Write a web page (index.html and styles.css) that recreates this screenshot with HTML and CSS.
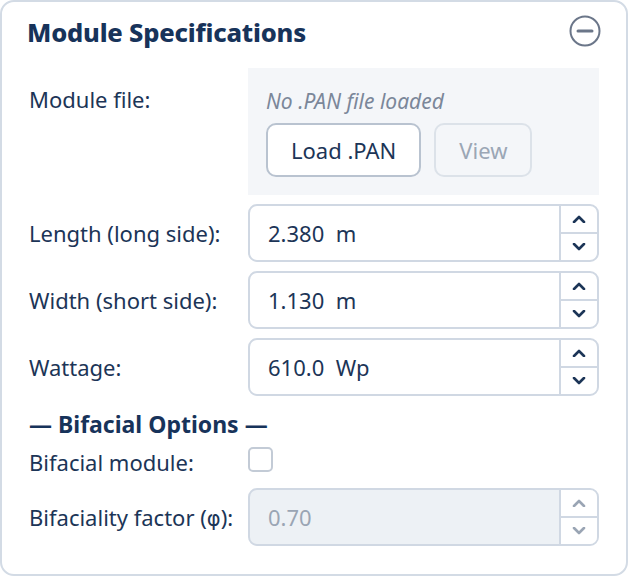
FILE: index.html
```html
<!DOCTYPE html>
<html lang="en">
<head>
    <meta charset="UTF-8">
    <meta name="viewport" content="width=device-width, initial-scale=1.0">
    <title>Module Specifications</title>
    <link rel="stylesheet" href="styles.css">
</head>
<body>
    <!-- module spec card -->
    <div class="card">
        <div class="head">
            <h2>Module Specifications</h2>
            <a href="#" class="toggle">
                <svg width="32" height="32" viewBox="0 0 32 32"><circle cx="16" cy="16" r="14.5" fill="none" stroke="#6b7689" stroke-width="2"/><line x1="9" y1="16" x2="23" y2="16" stroke="#6b7689" stroke-width="3" stroke-linecap="round"/></svg>
            </a>
        </div>

        <div class="row file_row">
            <label>Module file:</label>
            <div class="file_box">
                <em>No .PAN file loaded</em>
                <div class="btns">
                    <a href="#" class="btn">Load .PAN</a>
                    <a href="#" class="btn off">View</a>
                </div>
            </div>
        </div>

        <div class="row">
            <label>Length (long side):</label>
            <div class="num">
                <span class="val">2.380&nbsp; m</span>
                <div class="spin">
                    <span><svg width="14" height="8" viewBox="0 0 14 8"><path d="M2 7 L7 2 L12 7" fill="none" stroke="currentColor" stroke-width="2.6" stroke-linecap="round" stroke-linejoin="round"/></svg></span>
                    <span><svg width="14" height="8" viewBox="0 0 14 8"><path d="M2 1 L7 6 L12 1" fill="none" stroke="currentColor" stroke-width="2.6" stroke-linecap="round" stroke-linejoin="round"/></svg></span>
                </div>
            </div>
        </div>
        <div class="row">
            <label>Width (short side):</label>
            <div class="num">
                <span class="val">1.130&nbsp; m</span>
                <div class="spin">
                    <span><svg width="14" height="8" viewBox="0 0 14 8"><path d="M2 7 L7 2 L12 7" fill="none" stroke="currentColor" stroke-width="2.6" stroke-linecap="round" stroke-linejoin="round"/></svg></span>
                    <span><svg width="14" height="8" viewBox="0 0 14 8"><path d="M2 1 L7 6 L12 1" fill="none" stroke="currentColor" stroke-width="2.6" stroke-linecap="round" stroke-linejoin="round"/></svg></span>
                </div>
            </div>
        </div>
        <div class="row">
            <label>Wattage:</label>
            <div class="num">
                <span class="val">610.0&nbsp; Wp</span>
                <div class="spin">
                    <span><svg width="14" height="8" viewBox="0 0 14 8"><path d="M2 7 L7 2 L12 7" fill="none" stroke="currentColor" stroke-width="2.6" stroke-linecap="round" stroke-linejoin="round"/></svg></span>
                    <span><svg width="14" height="8" viewBox="0 0 14 8"><path d="M2 1 L7 6 L12 1" fill="none" stroke="currentColor" stroke-width="2.6" stroke-linecap="round" stroke-linejoin="round"/></svg></span>
                </div>
            </div>
        </div>

        <h3>— Bifacial Options —</h3>
        <div class="row check_row">
            <label>Bifacial module:</label>
            <span class="check"></span>
        </div>
        <div class="row">
            <label>Bifaciality factor (<span class="phi">φ</span>):</label>
            <div class="num dis">
                <span class="val">0.70</span>
                <div class="spin">
                    <span><svg width="14" height="8" viewBox="0 0 14 8"><path d="M2 7 L7 2 L12 7" fill="none" stroke="currentColor" stroke-width="2.6" stroke-linecap="round" stroke-linejoin="round"/></svg></span>
                    <span><svg width="14" height="8" viewBox="0 0 14 8"><path d="M2 1 L7 6 L12 1" fill="none" stroke="currentColor" stroke-width="2.6" stroke-linecap="round" stroke-linejoin="round"/></svg></span>
                </div>
            </div>
        </div>
    </div>
</body>
</html>
```

FILE: styles.css
```css
*{
    margin: 0;
    padding: 0;
    box-sizing: border-box;
}
body{
    font-family: "Noto Sans", "Open Sans", sans-serif;
    color: #1c3557;
    background: #fff;
}
.card{
    width: 628px;
    height: 576px;
    border: 2px solid #d3dbe5;
    border-radius: 14px;
    padding: 13px 27px 0 27px;
    display: flex;
    flex-direction: column;
}
.head{
    display: flex;
    justify-content: space-between;
    align-items: center;
    height: 36px;
}
.head h2{
    font-size: 25.5px;
    font-weight: 800;
    color: #17335a;
    letter-spacing: -0.2px;
    margin-top: -2px;
    margin-left: -2px;
}
.toggle{
    display: block;
    width: 32px;
    height: 32px;
    margin-right: -2px;
    margin-top: -4px;
}
.row{
    display: grid;
    grid-template-columns: 219px 1fr;
    align-items: center;
    margin-top: 9px;
    font-size: 22px;
}
.file_row{
    margin-top: 17px;
    align-items: start;
}
.file_row label{
    padding-top: 16px;
}
.file_box{
    background-color: #f4f6f9;
    height: 127px;
    padding: 18px 18px 0;
}
.file_box em{
    display: block;
    color: #7b8799;
    font-size: 21px;
    line-height: 30px;
}
.btns{
    display: flex;
    gap: 13px;
    margin-top: 7px;
}
.btn{
    text-decoration: none;
    display: block;
    height: 54px;
    line-height: 50px;
    padding: 0 23px;
    border: 2px solid #b9c3d0;
    border-radius: 10px;
    background: #fff;
    color: #1c3557;
    font-size: 22px;
}
.btn.off{
    background: transparent;
    border-color: #dce2e9;
    color: #9ba6b5;
    padding: 0 23px;
}
.num{
    display: flex;
    height: 58px;
    border: 2px solid #d0d8e3;
    border-radius: 9px;
    background: #fff;
}
.num .val{
    flex: 1;
    line-height: 54px;
    padding-left: 18px;
    font-size: 22px;
}
.spin{
    width: 38px;
    border-left: 2px solid #d0d8e3;
    display: flex;
    flex-direction: column;
    color: #1c3557;
    border-radius: 0 7px 7px 0;
}
.spin span{
    flex: 1;
    display: flex;
    align-items: center;
    justify-content: center;
}
.spin span + span{
    border-top: 2px solid #d0d8e3;
}
.num.dis{
    background: #edf1f5;
}
.num.dis .val{
    color: #9aa5b4;
}
.num.dis .spin{
    background: #fff;
    color: #9aa5b4;
}
.phi{
    font-family: "DejaVu Sans", sans-serif;
    font-size: 21px;
}
h3{
    margin-top: 12px;
    font-size: 23px;
    font-weight: 700;
    color: #17335a;
    line-height: 32px;
}
.check_row{
    margin-top: 6px;
    height: 32px;
}
.check{
    display: block;
    width: 25px;
    height: 25px;
    border: 2px solid #c3cbd6;
    border-radius: 5px;
    margin-top: -6px;
}
.check_row + .row{
    margin-top: 10px;
}
```
